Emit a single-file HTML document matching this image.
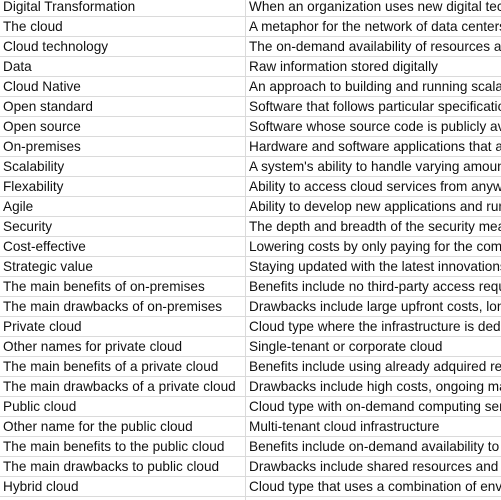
<!DOCTYPE html><html><head><style>
html,body{margin:0;width:501px;height:500px;overflow:hidden;}
body{background:#fff;font-family:"Liberation Sans",sans-serif;font-size:13.6px;color:#111;position:relative;}
.t{position:absolute;top:-3px;left:0;width:501px;}
.r{height:19px;border-bottom:1px solid #dadada;position:relative;white-space:nowrap;width:501px;overflow:hidden;}
.a{position:absolute;left:3px;top:2px;}
.b{position:absolute;left:249px;top:2px;}
.v{position:absolute;left:245px;top:0;width:1px;height:500px;background:#dadada;}
</style></head><body>
<div class="t">
<div class="r"><span class="a">Digital Transformation</span><span class="b">When an organization uses new digital technologies</span></div>
<div class="r"><span class="a">The cloud</span><span class="b">A metaphor for the network of data centers</span></div>
<div class="r"><span class="a">Cloud technology</span><span class="b">The on-demand availability of resources and</span></div>
<div class="r"><span class="a">Data</span><span class="b">Raw information stored digitally</span></div>
<div class="r"><span class="a">Cloud Native</span><span class="b">An approach to building and running scalable</span></div>
<div class="r"><span class="a">Open standard</span><span class="b">Software that follows particular specifications</span></div>
<div class="r"><span class="a">Open source</span><span class="b">Software whose source code is publicly available</span></div>
<div class="r"><span class="a">On-premises</span><span class="b">Hardware and software applications that are</span></div>
<div class="r"><span class="a">Scalability</span><span class="b">A system's ability to handle varying amounts</span></div>
<div class="r"><span class="a">Flexability</span><span class="b">Ability to access cloud services from anywhere</span></div>
<div class="r"><span class="a">Agile</span><span class="b">Ability to develop new applications and run</span></div>
<div class="r"><span class="a">Security</span><span class="b">The depth and breadth of the security measures</span></div>
<div class="r"><span class="a">Cost-effective</span><span class="b">Lowering costs by only paying for the computing</span></div>
<div class="r"><span class="a">Strategic value</span><span class="b">Staying updated with the latest innovations</span></div>
<div class="r"><span class="a">The main benefits of on-premises</span><span class="b">Benefits include no third-party access required</span></div>
<div class="r"><span class="a">The main drawbacks of on-premises</span><span class="b">Drawbacks include large upfront costs, long</span></div>
<div class="r"><span class="a">Private cloud</span><span class="b">Cloud type where the infrastructure is dedicated</span></div>
<div class="r"><span class="a">Other names for private cloud</span><span class="b">Single-tenant or corporate cloud</span></div>
<div class="r"><span class="a">The main benefits of a private cloud</span><span class="b">Benefits include using already adquired resources</span></div>
<div class="r"><span class="a">The main drawbacks of a private cloud</span><span class="b">Drawbacks include high costs, ongoing maintenance</span></div>
<div class="r"><span class="a">Public cloud</span><span class="b">Cloud type with on-demand computing services</span></div>
<div class="r"><span class="a">Other name for the public cloud</span><span class="b">Multi-tenant cloud infrastructure</span></div>
<div class="r"><span class="a">The main benefits to the public cloud</span><span class="b">Benefits include on-demand availability to</span></div>
<div class="r"><span class="a">The main drawbacks to public cloud</span><span class="b">Drawbacks include shared resources and</span></div>
<div class="r"><span class="a">Hybrid cloud</span><span class="b">Cloud type that uses a combination of environments</span></div>
</div>
<div class="v"></div>
</body></html>
